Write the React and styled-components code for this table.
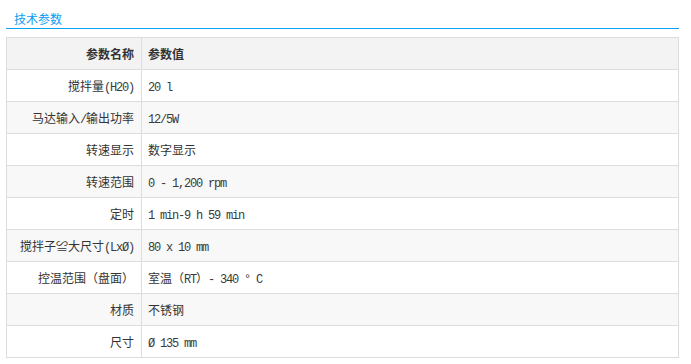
import styled, { createGlobalStyle } from "styled-components";

const specs = [
  { name: "搅拌量(H20)", value: "20 l" },
  { name: "马达输入/输出功率", value: "12/5W" },
  { name: "转速显示", value: "数字显示" },
  { name: "转速范围", value: "0 - 1,200 rpm" },
  { name: "定时", value: "1 min-9 h 59 min" },
  { name: "搅拌子≌大尺寸(LxØ)", value: "80 x 10 mm" },
  { name: "控温范围（盘面）", value: "室温（RT）- 340 ° C" },
  { name: "材质", value: "不锈钢" },
  { name: "尺寸", value: "Ø 135 mm" },
];

// half-width runs get squeezed to 6px per char, like the old 宋体 page
function Mixed({ text }) {
  const parts = text.split(/([\u0020-\u007e°Ø]+)/).filter(Boolean);
  return parts.map((part, i) =>
    /^[\u0020-\u007e°Ø]+$/.test(part) ? <Half key={i}>{part}</Half> : <span key={i}>{part}</span>
  );
}

export default function App() {
  return (
    <>
      <GlobalStyle />
      <Panel>
        <Title>技术参数</Title>
        <SpecTable>
          <thead>
            <tr>
              <HeadCell $label>参数名称</HeadCell>
              <HeadCell>参数值</HeadCell>
            </tr>
          </thead>
          <tbody>
            {specs.map((row, i) => (
              <Row key={row.name} $alt={i % 2 === 1}>
                <LabelCell>
                  <Mixed text={row.name} />
                </LabelCell>
                <ValueCell>
                  <Mixed text={row.value} />
                </ValueCell>
              </Row>
            ))}
          </tbody>
        </SpecTable>
      </Panel>
    </>
  );
}

const GlobalStyle = createGlobalStyle`
  body {
    margin: 0;
    background: #fff;
    font-family: "Noto Sans CJK SC", sans-serif;
    font-size: 12px;
    color: #333;
  }
`;

const Panel = styled.div`
  width: 673px;
  margin-left: 6px;
`;

const Title = styled.div`
  padding: 10px 0 0 8px;
  height: 18px;
  line-height: 18px;
  color: #0a9cf5;
  border-bottom: 1px solid #0aa3f2;
  margin-bottom: 8px;
`;

const Half = styled.span`
  font-family: "Liberation Mono", monospace;
  letter-spacing: -1.2px;
  color: #3a3a3a;
`;

const SpecTable = styled.table`
  width: 100%;
  border-collapse: collapse;
  border: 1px solid #dddddd;
  table-layout: fixed;
`;

const HeadCell = styled.th`
  width: ${(p) => (p.$label ? "127px" : "auto")};
  height: 31px;
  padding: ${(p) => (p.$label ? "0 7px 0 0" : "0 0 0 6px")};
  background: #f3f3f3;
  border: 1px solid #dddddd;
  text-align: ${(p) => (p.$label ? "right" : "left")};
  font-weight: bold;
  color: #333;
`;

const Row = styled.tr`
  background: ${(p) => (p.$alt ? "#f8f8f8" : "#ffffff")};
`;

const LabelCell = styled.td`
  height: 31px;
  padding: 0 7px 0 0;
  border: 1px solid #dddddd;
  text-align: right;
  white-space: nowrap;
`;

const ValueCell = styled.td`
  height: 31px;
  padding: 0 0 0 6px;
  border: 1px solid #dddddd;
  text-align: left;
  white-space: nowrap;
`;
